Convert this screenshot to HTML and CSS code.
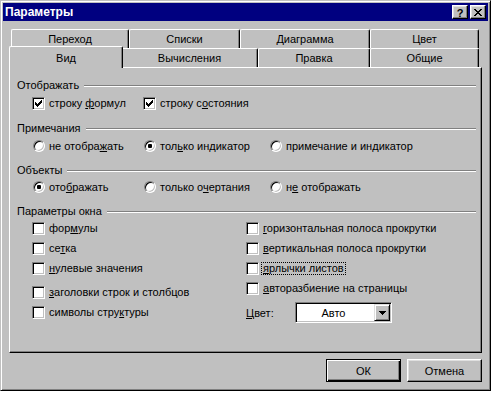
FILE: index.html
```html
<!DOCTYPE html>
<html lang="ru">
<head>
<meta charset="utf-8">
<title>Параметры</title>
<link rel="stylesheet" href="styles.css">
</head>
<body>
<div class="window">
  <div class="titlebar">
    <span class="title">Параметры</span>
    <div class="tbtns">
      <span class="tbtn help">?</span>
      <span class="tbtn close">
        <svg width="8" height="7" viewBox="0 0 8 7" shape-rendering="crispEdges">
          <path fill="#000" d="M0 0h2v1H0zM6 0h2v1H6zM1 1h2v1H1zM5 1h2v1H5zM2 2h4v1H2zM3 3h2v1H3zM2 4h4v1H2zM1 5h2v1H1zM5 5h2v1H5zM0 6h2v1H0zM6 6h2v1H6z"/>
        </svg>
      </span>
    </div>
  </div>

  <div class="body">
    <div class="tabs">
      <div class="tabrow">
        <div class="tab w-go">Переход</div>
        <div class="tab w-lists">Списки</div>
        <div class="tab w-chart">Диаграмма</div>
        <div class="tab w-color">Цвет</div>
      </div>
      <div class="tabrow">
        <div class="tab w-view selected">Вид</div>
        <div class="tab w-calc">Вычисления</div>
        <div class="tab w-edit">Правка</div>
        <div class="tab w-gen">Общие</div>
      </div>
    </div>

    <div class="panel">
      <div class="group">
        <span>Отображать</span><span class="line"></span>
      </div>
      <div class="opts r1">
        <label class="opt"><span class="cb checked"><svg width="7" height="7" viewBox="0 0 7 7" shape-rendering="crispEdges"><path fill="#000" d="M6 0h1v1H6zM5 1h2v1H5zM0 2h1v1H0zM4 2h3v1H4zM0 3h2v1H0zM3 3h3v1H3zM0 4h5v1H0zM1 5h3v1H1zM2 6h1v1H2z"/></svg></span><span>строку <u>ф</u>ормул</span></label>
        <label class="opt"><span class="cb checked"><svg width="7" height="7" viewBox="0 0 7 7" shape-rendering="crispEdges"><path fill="#000" d="M6 0h1v1H6zM5 1h2v1H5zM0 2h1v1H0zM4 2h3v1H4zM0 3h2v1H0zM3 3h3v1H3zM0 4h5v1H0zM1 5h3v1H1zM2 6h1v1H2z"/></svg></span><span>строку с<u>о</u>стояния</span></label>
      </div>

      <div class="group g2">
        <span>Примечания</span><span class="line"></span>
      </div>
      <div class="opts r2">
        <label class="opt"><span class="rb"></span><span>не отобра<u>ж</u>ать</span></label>
        <label class="opt"><span class="rb on"></span><span>тол<u>ь</u>ко индикатор</span></label>
        <label class="opt"><span class="rb"></span><span>примечание и ин<u>д</u>икатор</span></label>
      </div>

      <div class="group g3">
        <span>Объекты</span><span class="line"></span>
      </div>
      <div class="opts r3">
        <label class="opt"><span class="rb on"></span><span>ото<u>б</u>ражать</span></label>
        <label class="opt"><span class="rb"></span><span>только о<u>ч</u>ертания</span></label>
        <label class="opt"><span class="rb"></span><span>н<u>е</u> отображать</span></label>
      </div>

      <div class="group g4">
        <span>Параметры окна</span><span class="line"></span>
      </div>
      <div class="cols">
        <div class="col left">
          <label class="opt row"><span class="cb"></span><span>фор<u>м</u>улы</span></label>
          <label class="opt row"><span class="cb"></span><span>се<u>т</u>ка</span></label>
          <label class="opt row"><span class="cb"></span><span><u>н</u>улевые значения</span></label>
          <label class="opt row gap-big"><span class="cb"></span><span><u>з</u>аголовки строк и столбцов</span></label>
          <label class="opt row"><span class="cb"></span><span>символы стру<u>к</u>туры</span></label>
        </div>
        <div class="col right">
          <label class="opt row"><span class="cb"></span><span><u>г</u>оризонтальная полоса прокрутки</span></label>
          <label class="opt row"><span class="cb"></span><span><u>в</u>ертикальная полоса прокрутки</span></label>
          <label class="opt row"><span class="cb"></span><span class="focus"><u>я</u>рлычки листов</span></label>
          <label class="opt row"><span class="cb"></span><span><u>а</u>вторазбиение на страницы</span></label>
          <div class="colorrow">
            <span class="clabel"><u>Ц</u>вет:</span>
            <div class="combo">
              <span class="cval">Авто</span>
              <span class="cbtn"><svg width="7" height="4" viewBox="0 0 7 4" shape-rendering="crispEdges"><path fill="#000" d="M0 0h7v1H0zM1 1h5v1H1zM2 2h3v1H2zM3 3h1v1H3z"/></svg></span>
            </div>
          </div>
        </div>
      </div>
    </div>

    <div class="btnrow">
      <div class="btn default">ОК</div>
      <div class="btn">Отмена</div>
    </div>
  </div>
</div>
</body>
</html>
```

FILE: styles.css
```css
html, body {
  margin: 0;
  padding: 0;
  background: #ffffff;
}

body {
  font-family: "Liberation Sans", Arial, sans-serif;
  font-size: 11px;
  color: #000;
}

.window {
  width: 491px;
  height: 391px;
  box-sizing: border-box;
  background: #c0c0c0;
  border: 1px solid;
  border-color: #c0c0c0 #000 #000 #c0c0c0;
  box-shadow: inset 1px 1px 0 #fff, inset -1px -1px 0 #808080;
  padding: 2px;
}

.titlebar {
  height: 18px;
  background: #000080;
  display: flex;
  align-items: center;
  justify-content: space-between;
  padding: 0 2px 0 2px;
}

.title {
  color: #fff;
  font-weight: bold;
  font-size: 12px;
  line-height: 18px;
}

.tbtns {
  display: flex;
  gap: 2px;
  align-items: center;
}

.tbtn {
  width: 16px;
  height: 14px;
  box-sizing: border-box;
  background: #c0c0c0;
  border: 1px solid;
  border-color: #fff #000 #000 #fff;
  box-shadow: inset -1px -1px 0 #808080, inset 1px 1px 0 #dfdfdf;
  display: flex;
  align-items: center;
  justify-content: center;
}

.help {
  font-weight: bold;
  font-size: 11px;
  line-height: 12px;
  padding-top: 1px;
}

.close svg {
  display: block;
}

.body {
  padding: 8px 6px 0 6px;
}

.tabs {
  padding-left: 2px;
}

.tabrow {
  display: flex;
  height: 19px;
  align-items: flex-start;
}

.tab {
  height: 19px;
  box-sizing: border-box;
  background: #c0c0c0;
  border-top: 1px solid #fff;
  border-left: 1px solid #fff;
  border-right: 1px solid #000;
  border-radius: 2px 2px 0 0;
  box-shadow: inset -1px 0 0 #808080;
  text-align: center;
  line-height: 13px;
  padding-top: 3px;
}

.tab.selected {
  position: relative;
  z-index: 2;
  height: 22px;
  margin: -2px -2px 0 -2px;
  padding-top: 5px;
}

.w-go { width: 118px; }
.w-lists { width: 111px; }
.w-chart { width: 130px; }
.w-color { width: 109px; }
.w-view { width: 114px; }
.w-calc { width: 137px; }
.w-edit { width: 112px; }
.w-gen { width: 109px; }

.panel {
  height: 286px;
  box-sizing: border-box;
  border: 1px solid;
  border-color: #fff #000 #000 #fff;
  box-shadow: inset -1px -1px 0 #808080;
  padding: 10px 5px 0 7px;
}

.group {
  display: flex;
  align-items: center;
  height: 14px;
  line-height: 14px;
}

.group .line {
  flex: 1;
  height: 0;
  border-top: 1px solid #808080;
  border-bottom: 1px solid #fff;
  margin-left: 5px;
  margin-top: 2px;
}

.g2 { margin-top: 9px; }
.g3 { margin-top: 8px; }
.g4 { margin-top: 8px; }

.opts {
  display: grid;
  grid-template-columns: 111px 126px 1fr;
  height: 18px;
  padding-left: 15px;
}

.r1 { margin-top: 2px; }
.r2 { margin-top: 2px; }
.r3 { margin-top: 1px; }

.opt {
  display: flex;
  align-items: center;
  gap: 4px;
  height: 18px;
  white-space: nowrap;
}

u {
  text-decoration: underline;
  text-underline-offset: 1px;
}

.cb {
  width: 13px;
  height: 13px;
  box-sizing: border-box;
  flex: none;
  background: #fff;
  border: 1px solid;
  border-color: #808080 #fff #fff #808080;
  box-shadow: inset 1px 1px 0 #000, inset -1px -1px 0 #c0c0c0;
  display: flex;
  align-items: center;
  justify-content: center;
}

.cb svg {
  display: block;
}

.rb {
  width: 12px;
  height: 12px;
  box-sizing: border-box;
  flex: none;
  margin-left: 1px;
  border-radius: 50%;
  background: #fff;
  border: 1px solid;
  border-color: #808080 #fff #fff #808080;
  box-shadow: inset 1px 1px 0 #000, inset -1px -1px 0 #c0c0c0;
  display: flex;
  align-items: center;
  justify-content: center;
}

.rb.on::after {
  content: "";
  width: 4px;
  height: 4px;
  border-radius: 1px;
  background: #000;
}

.cols {
  display: flex;
  margin-top: 1px;
  padding-left: 15px;
}

.col {
  display: flex;
  flex-direction: column;
  gap: 2px;
}

.col.left {
  width: 214px;
}

.gap-big {
  margin-top: 4px;
}

.focus {
  outline: 1px dotted #000;
  outline-offset: 0;
  padding: 0 1px;
  margin-left: -1px;
  line-height: 11px;
}

.colorrow {
  display: flex;
  align-items: center;
  margin-top: 3px;
}

.clabel {
  width: 49px;
}

.combo {
  width: 97px;
  height: 21px;
  box-sizing: border-box;
  background: #fff;
  border: 1px solid;
  border-color: #808080 #fff #fff #808080;
  box-shadow: inset 1px 1px 0 #000, inset -1px -1px 0 #c0c0c0;
  display: flex;
  align-items: center;
  padding: 1px 1px 1px 1px;
}

.cval {
  flex: 1;
  text-align: center;
  padding-right: 4px;
}

.cbtn {
  width: 16px;
  height: 17px;
  box-sizing: border-box;
  background: #c0c0c0;
  border: 1px solid;
  border-color: #dfdfdf #000 #000 #dfdfdf;
  box-shadow: inset 1px 1px 0 #fff, inset -1px -1px 0 #808080;
  display: flex;
  align-items: center;
  justify-content: center;
}

.cbtn svg {
  display: block;
}

.btnrow {
  display: flex;
  justify-content: flex-end;
  gap: 6px;
  margin-top: 6px;
}

.btn {
  width: 75px;
  height: 23px;
  box-sizing: border-box;
  background: #c0c0c0;
  border: 1px solid;
  border-color: #fff #000 #000 #fff;
  box-shadow: inset -1px -1px 0 #808080, inset 1px 1px 0 #dfdfdf;
  display: flex;
  align-items: center;
  justify-content: center;
}

.btn.default {
  border-color: #000;
  box-shadow: inset 1px 1px 0 #fff, inset -1px -1px 0 #000, inset -2px -2px 0 #808080;
}
```
